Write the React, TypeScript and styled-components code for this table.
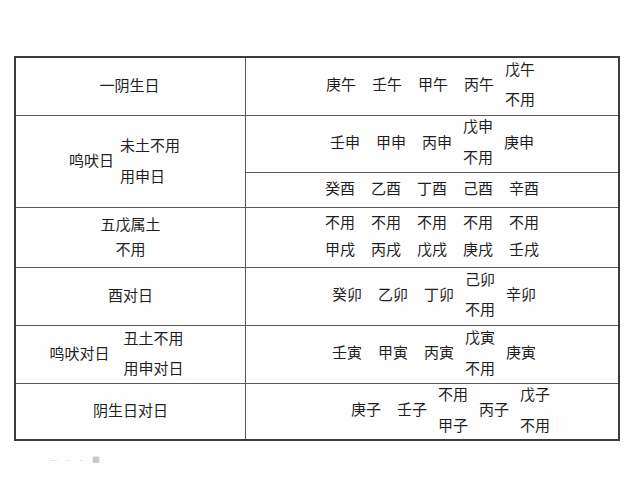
import React from 'react';
import styled, {createGlobalStyle} from "styled-components";

const GlobalStyle = createGlobalStyle`
  html, body {
    margin: 0;
    padding: 0;
    background: #ffffff;
  }
  body {
    font-family: "Noto Sans CJK SC", "Noto Sans CJK TC", sans-serif;
    color: #1f1f1f;
  }
`

const Page = styled.div`
  width: 640px;
  height: 500px;
  box-sizing: border-box;
  padding: 56px 0 0 14px;
  background: #fefefe;
`

const Table = styled.div`
  box-sizing: border-box;
  width: 606px;
  height: 385px;
  display: grid;
  grid-template-columns: 229px 1fr;
  grid-template-rows: 57px 56px 34px 59px 57px 57px 55px;
  gap: 1px;
  background: #5a5a5a;
  border: 2px solid #3c3c3c;
`

const LeftCell = styled.div<{ $span?: number, $shift?: number }>`
  grid-column: 1;
  grid-row: span ${p => p.$span || 1};
  background: #fefefe;
  display: flex;
  align-items: center;
  justify-content: center;
  padding-right: ${p => p.$shift || 0}px;
  padding-bottom: 3px;
`

const RightCell = styled.div<{ $shift?: number }>`
  grid-column: 2;
  background: #fefefe;
  display: flex;
  align-items: center;
  justify-content: center;
  gap: 16px;
  padding-left: ${p => p.$shift && p.$shift > 0 ? p.$shift : 0}px;
  padding-right: ${p => p.$shift && p.$shift < 0 ? -p.$shift : 0}px;
  padding-bottom: 5px;
`

const Word = styled.span`
  font-size: 15px;
  line-height: 16px;
  white-space: nowrap;
`

const Stack = styled.div<{ $gap?: number, $align?: string }>`
  display: flex;
  flex-direction: column;
  align-items: ${p => p.$align || "center"};
  gap: ${p => p.$gap ?? 14}px;
  margin: 0 -5px;
`

const Label = styled.div<{ $gap?: number }>`
  display: flex;
  align-items: center;
  gap: ${p => p.$gap ?? 8}px;
`

const Footnote = styled.div`
  margin: 13px 0 0 36px;
  font-size: 8px;
  letter-spacing: 4px;
  color: #c9c9c9;
`

const Pair = ({top, bottom, gap}: { top: string, bottom: string, gap?: number }) => (
    <Stack $gap={gap}>
        <Word>{top}</Word>
        <Word>{bottom}</Word>
    </Stack>
)

const Line = ({items}: { items: string[] }) => (
    <>
        {items.map(i => <Word key={i}>{i}</Word>)}
    </>
)

export default function App() {
    return (
        <>
            <GlobalStyle/>
            <Page>
                <Table>
                    <LeftCell $shift={2}><Word>一阴生日</Word></LeftCell>
                    <RightCell $shift={-8}>
                        <Line items={["庚午", "壬午", "甲午", "丙午"]}/>
                        <Pair top="戊午" bottom="不用"/>
                    </RightCell>

                    <LeftCell $span={2} $shift={12}>
                        <Label $gap={6}>
                            <Word>鸣吠日</Word>
                            <Stack $gap={15} $align="flex-start" style={{margin: 0}}>
                                <Word>未土不用</Word>
                                <Word>用申日</Word>
                            </Stack>
                        </Label>
                    </LeftCell>
                    <RightCell>
                        <Line items={["壬申", "甲申", "丙申"]}/>
                        <Pair top="戊申" bottom="不用" gap={15}/>
                        <Word>庚申</Word>
                    </RightCell>
                    <RightCell>
                        <Line items={["癸酉", "乙酉", "丁酉", "己酉", "辛酉"]}/>
                    </RightCell>

                    <LeftCell>
                        <Stack $gap={9} style={{margin: 0}}>
                            <Word>五戊属土</Word>
                            <Word>不用</Word>
                        </Stack>
                    </LeftCell>
                    <RightCell>
                        {["甲戌", "丙戌", "戊戌", "庚戌", "壬戌"].map(w => (
                            <Stack key={w} $gap={11} style={{margin: 0}}>
                                <Word>不用</Word>
                                <Word>{w}</Word>
                            </Stack>
                        ))}
                    </RightCell>

                    <LeftCell><Word>酉对日</Word></LeftCell>
                    <RightCell $shift={4}>
                        <Line items={["癸卯", "乙卯", "丁卯"]}/>
                        <Pair top="己卯" bottom="不用"/>
                        <Word>辛卯</Word>
                    </RightCell>

                    <LeftCell $shift={28}>
                        <Label $gap={14}>
                            <Word>鸣吠对日</Word>
                            <Stack $gap={14} style={{margin: 0}}>
                                <Word>丑土不用</Word>
                                <Word>用申对日</Word>
                            </Stack>
                        </Label>
                    </LeftCell>
                    <RightCell $shift={4}>
                        <Line items={["壬寅", "甲寅", "丙寅"]}/>
                        <Pair top="戊寅" bottom="不用" gap={15}/>
                        <Word>庚寅</Word>
                    </RightCell>

                    <LeftCell $shift={-4}><Word>阴生日对日</Word></LeftCell>
                    <RightCell $shift={32}>
                        <Line items={["庚子", "壬子"]}/>
                        <Pair top="不用" bottom="甲子" gap={15}/>
                        <Word>丙子</Word>
                        <Pair top="戊子" bottom="不用" gap={15}/>
                    </RightCell>
                </Table>
                <Footnote>— - - ■</Footnote>
            </Page>
        </>
    )
}
